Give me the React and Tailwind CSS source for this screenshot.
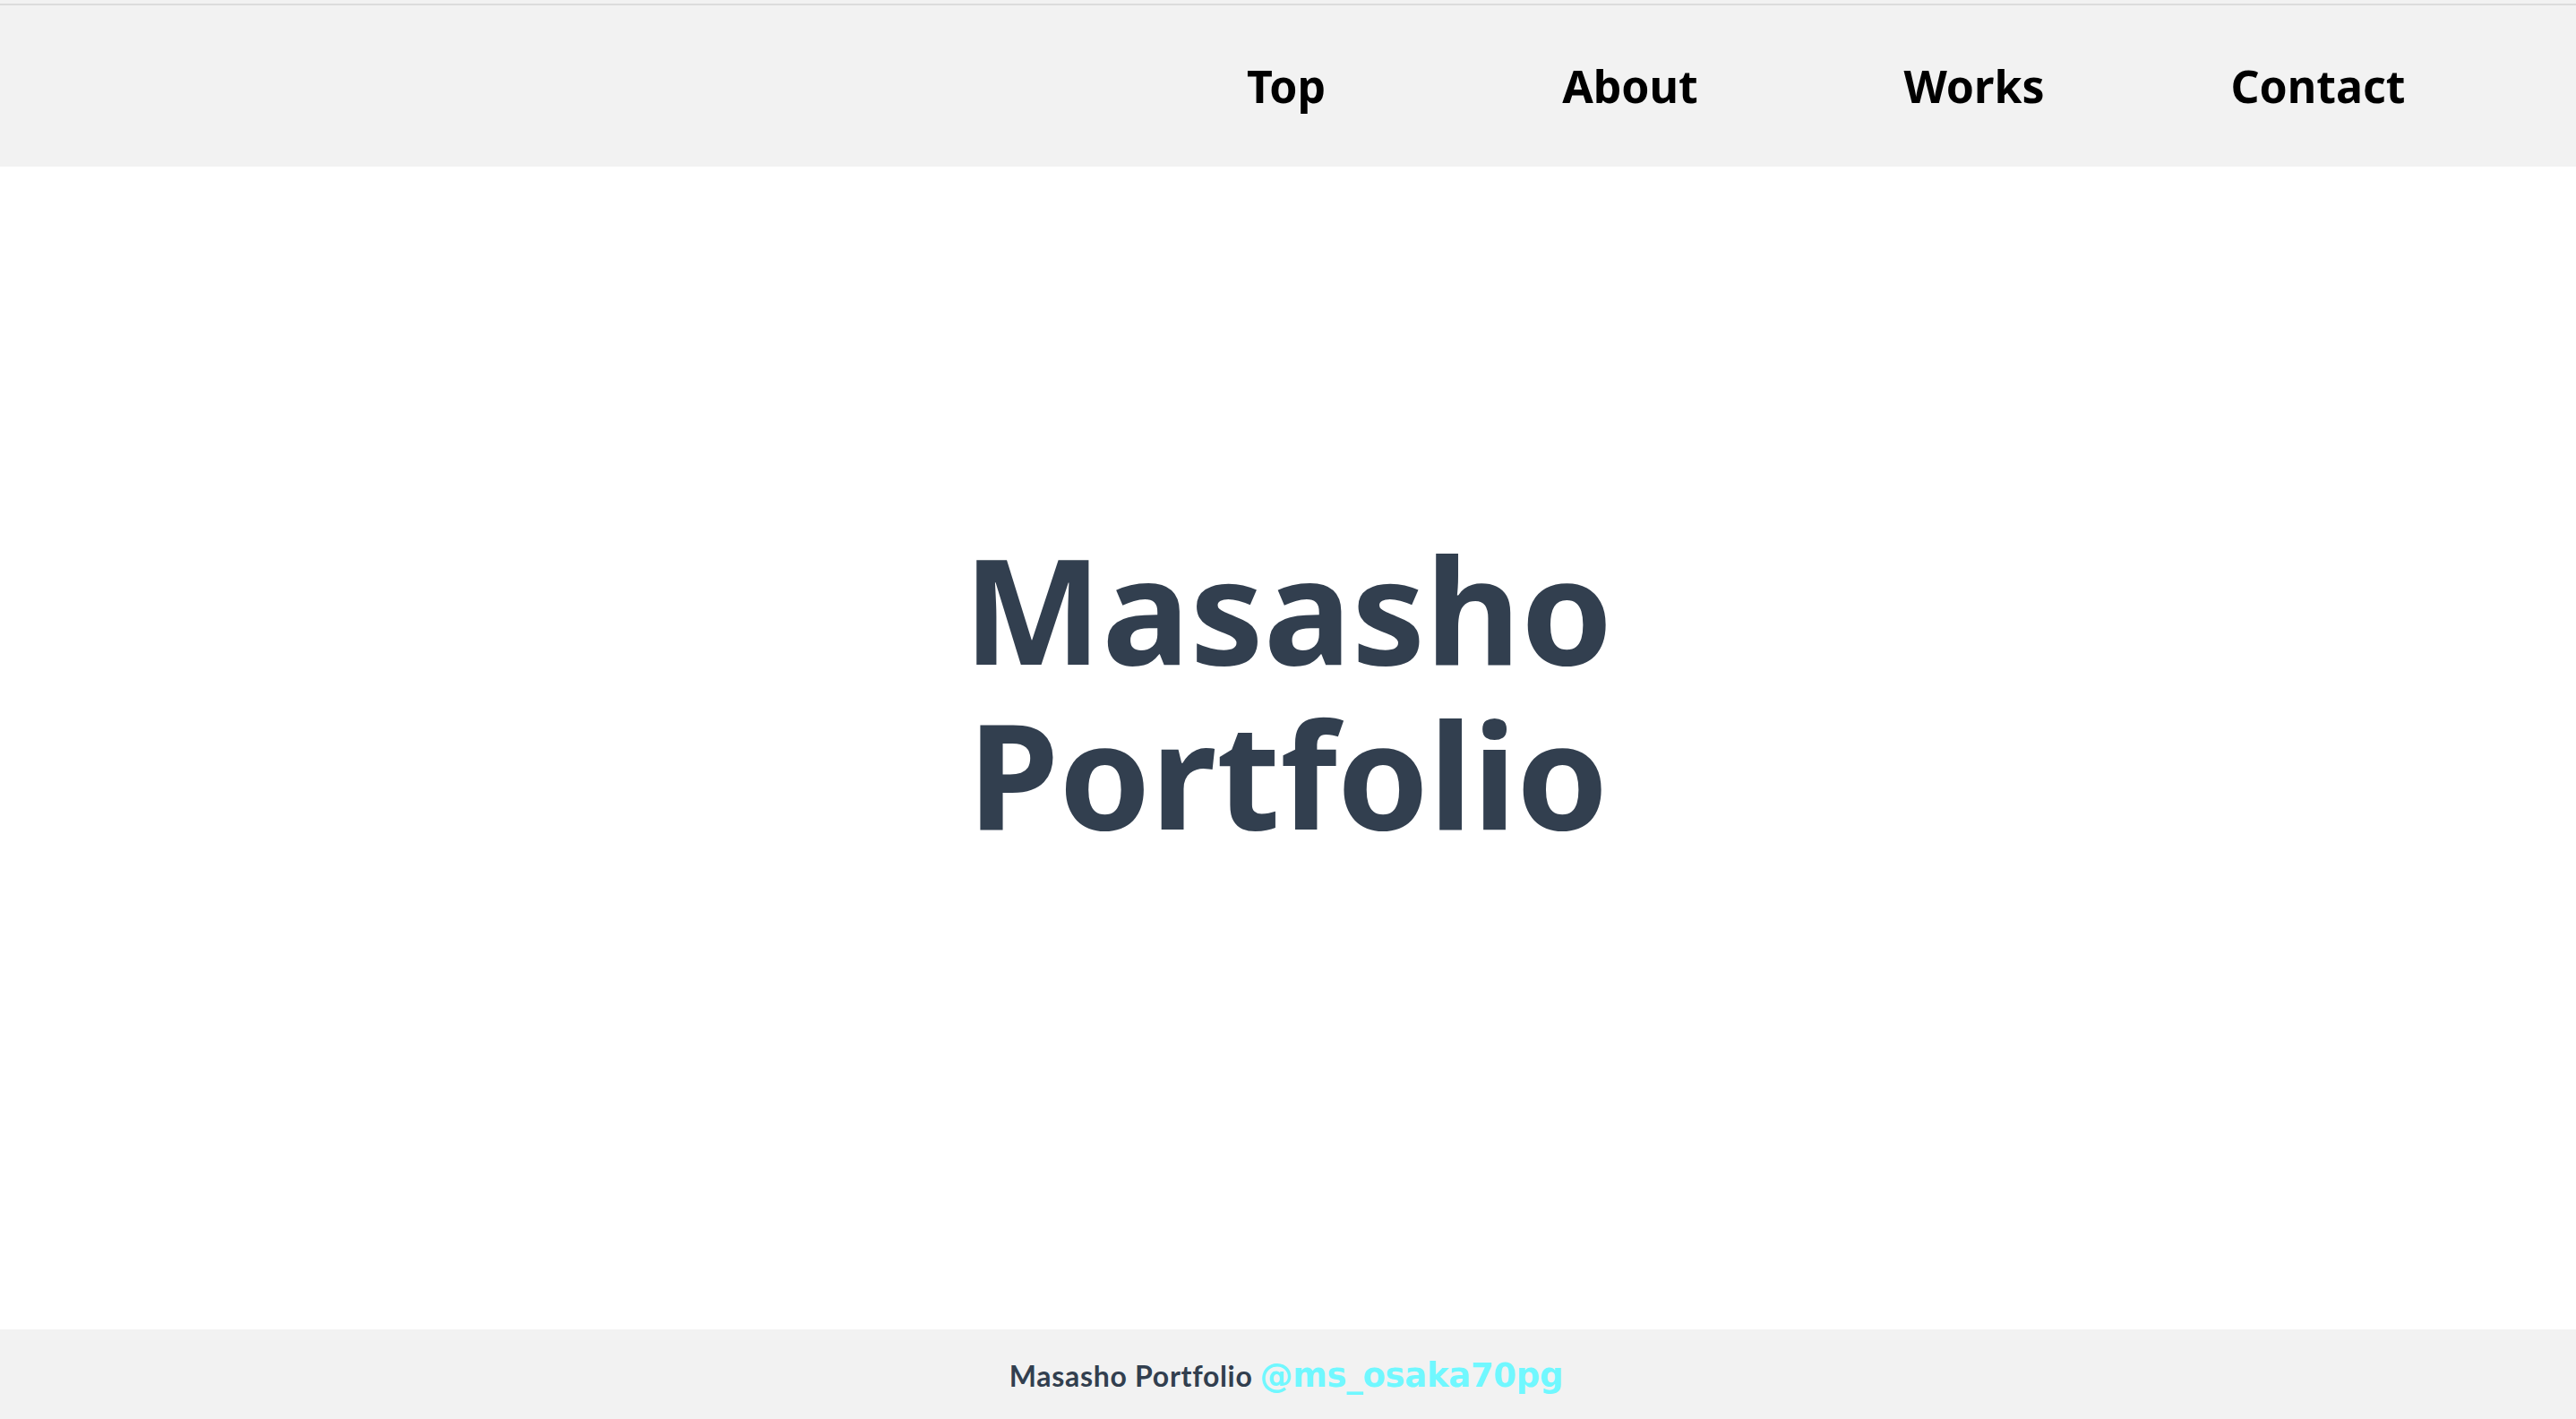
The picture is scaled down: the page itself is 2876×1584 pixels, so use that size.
import React from "react";

export default function App() {
  const nav = ["Top", "About", "Works", "Contact"];
  return (
    <div className="w-full min-h-screen bg-white flex flex-col">
      <div className="h-[4px] bg-[#f2f2f2]" />
      <div className="h-[2px] bg-[#dcdcdc]" />
      <header className="h-[180px] bg-[#f2f2f2] flex items-center justify-end pr-[96px]">
        <nav className="flex">
          {nav.map((n) => (
            <a
              key={n}
              className="w-[384px] text-center text-[50px] font-bold text-black font-['Noto_Sans',sans-serif] leading-none"
            >
              {n}
            </a>
          ))}
        </nav>
      </header>
      <main className="h-[1298px] flex items-center justify-center pb-[128px]">
        <h1 className="text-center text-[164px] font-bold text-[#323f4f] font-['Noto_Sans',sans-serif]">
          <span className="block leading-[184px]">Masasho</span>
          <span className="block leading-[184px]">Portfolio</span>
        </h1>
      </main>
      <footer className="h-[100px] bg-[#f2f2f2] flex items-center justify-center pt-[4px]">
        <p className="flex items-baseline gap-[8px] pr-[4px]">
          <span className="text-[32px] tracking-[0.7px] text-[#323f4f] font-['Lato',sans-serif] font-bold">
            Masasho Portfolio
          </span>
          <span className="text-[37px] text-[#70f8ff] font-['DejaVu_Sans',sans-serif] font-bold tracking-[-0.3px]">
            @ms_osaka70pg
          </span>
        </p>
      </footer>
    </div>
  );
}
